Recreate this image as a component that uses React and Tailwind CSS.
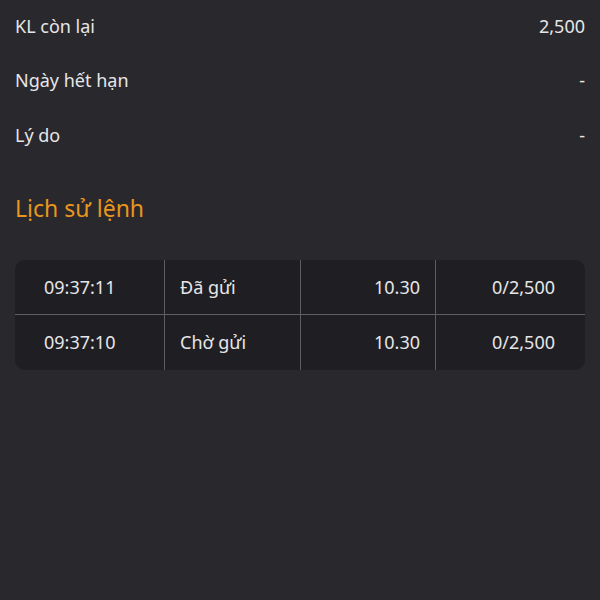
import React from "react";

const rows = [
  ["09:37:11", "Đã gửi", "10.30", "0/2,500"],
  ["09:37:10", "Chờ gửi", "10.30", "0/2,500"],
];

export default function App() {
  return (
    <div
      className="w-[600px] h-[600px] bg-[#29282d] text-[#e6e6e8] px-[15px] overflow-hidden"
      style={{ fontFamily: '"Noto Sans", sans-serif' }}
    >
      <div className="flex flex-col text-[18px]">
        <div className="flex justify-between items-center h-[53px]">
          <span>KL còn lại</span>
          <span>2,500</span>
        </div>
        <div className="flex justify-between items-center h-[54px]">
          <span>Ngày hết hạn</span>
          <span>-</span>
        </div>
        <div className="flex justify-between items-center h-[56px]">
          <span>Lý do</span>
          <span>-</span>
        </div>
      </div>
      <div className="mt-[30px] text-[23px] text-[#e8961e] leading-[30px]">Lịch sử lệnh</div>
      <div className="mt-[37px] bg-[#1f1e23] rounded-[10px] text-[18px]">
        {rows.map((r, i) => (
          <div
            key={i}
            className={`grid grid-cols-[149px_136px_135px_150px] h-[55px] ${i === 0 ? "border-b border-[#5e5d62]" : ""}`}
          >
            <div className="flex items-center pl-[29px]">{r[0]}</div>
            <div className="flex items-center pl-[15px] border-l border-[#5e5d62]">{r[1]}</div>
            <div className="flex items-center justify-end pr-[15px] border-l border-[#5e5d62]">{r[2]}</div>
            <div className="flex items-center justify-end pr-[30px] border-l border-[#5e5d62]">{r[3]}</div>
          </div>
        ))}
      </div>
    </div>
  );
}
